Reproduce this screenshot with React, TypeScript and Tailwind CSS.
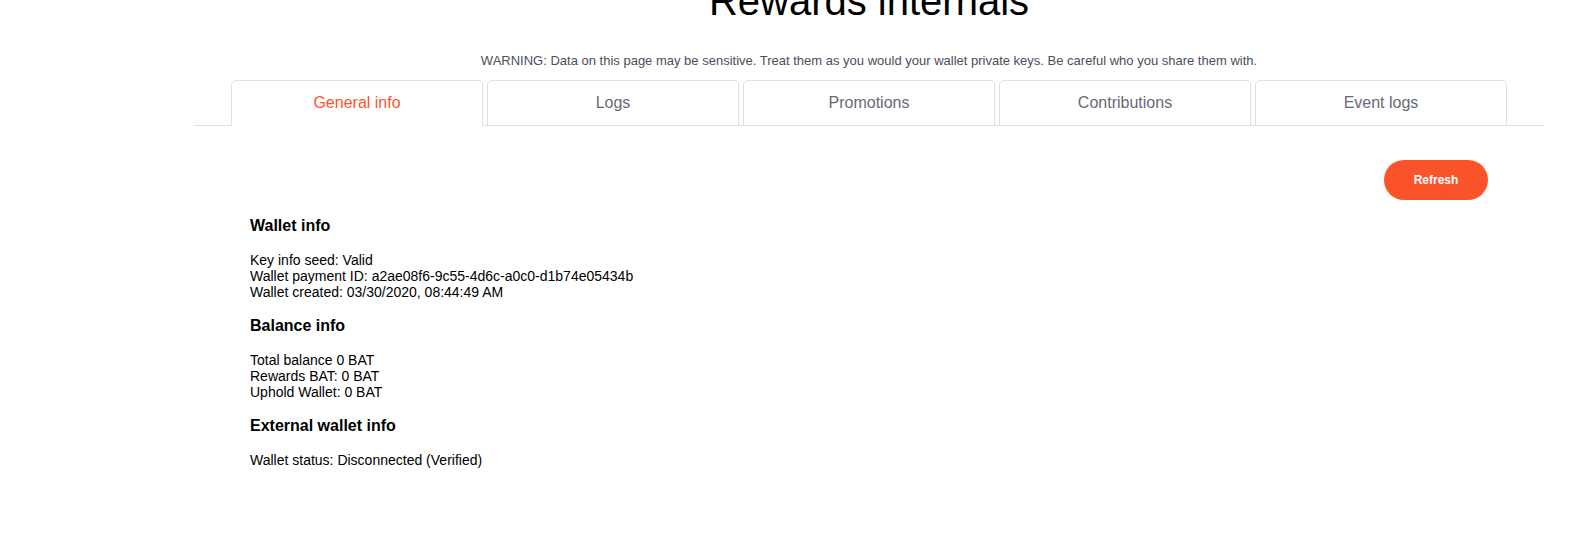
const tabs = ["General info", "Logs", "Promotions", "Contributions", "Event logs"];

function Section({ title, lines, first }: { title: string; lines: string[]; first?: boolean }) {
  return (
    <div className={first ? "" : "mt-[17px]"}>
      <h3 className="text-[16px] font-bold leading-[18px] text-black">{title}</h3>
      <div className="mt-[17px] text-[14px] leading-[16px] text-black">
        {lines.map((l) => (
          <div key={l}>{l}</div>
        ))}
      </div>
    </div>
  );
}

export default function App() {
  const active = 0;
  return (
    <div className="h-[546px] w-full overflow-hidden bg-white font-['Liberation_Sans',Arial,sans-serif]">
      <div className="ml-[194px] w-[1350px]">
        <h1 className="-mt-[22px] text-center text-[40px] font-normal leading-[46px] text-black">Rewards internals</h1>
        <p className="mt-[29px] text-center text-[13px] leading-[15px] text-[#4b4e5c]">
          WARNING: Data on this page may be sensitive. Treat them as you would your wallet private keys. Be careful who you share them with.
        </p>

        <div className="mt-[12px] flex justify-center gap-[4px] border-b border-[#dfdfe8]">
          {tabs.map((t, i) => (
            <button
              key={t}
              className={
                i === active
                  ? "relative -mb-px h-[46px] w-[252px] rounded-t-[5px] border border-b-0 border-[#dfdfe8] bg-white pb-px text-[16px] text-[#fb542b]"
                  : "h-[45px] w-[252px] rounded-t-[5px] border border-b-0 border-[#dfdfe8] bg-white text-[16px] text-[#686978]"
              }
            >
              {t}
            </button>
          ))}
        </div>

        <div className="px-[56px]">
          <div className="mt-[34px] flex justify-end">
            <button className="h-[40px] w-[104px] rounded-full bg-[#fb542b] text-[12px] font-semibold text-white">Refresh</button>
          </div>
          <div className="mt-[17px]">
            <Section
              first
              title="Wallet info"
              lines={[
                "Key info seed: Valid",
                "Wallet payment ID: a2ae08f6-9c55-4d6c-a0c0-d1b74e05434b",
                "Wallet created: 03/30/2020, 08:44:49 AM",
              ]}
            />
            <Section title="Balance info" lines={["Total balance 0 BAT", "Rewards BAT: 0 BAT", "Uphold Wallet: 0 BAT"]} />
            <Section title="External wallet info" lines={["Wallet status: Disconnected (Verified)"]} />
          </div>
        </div>
      </div>
    </div>
  );
}
